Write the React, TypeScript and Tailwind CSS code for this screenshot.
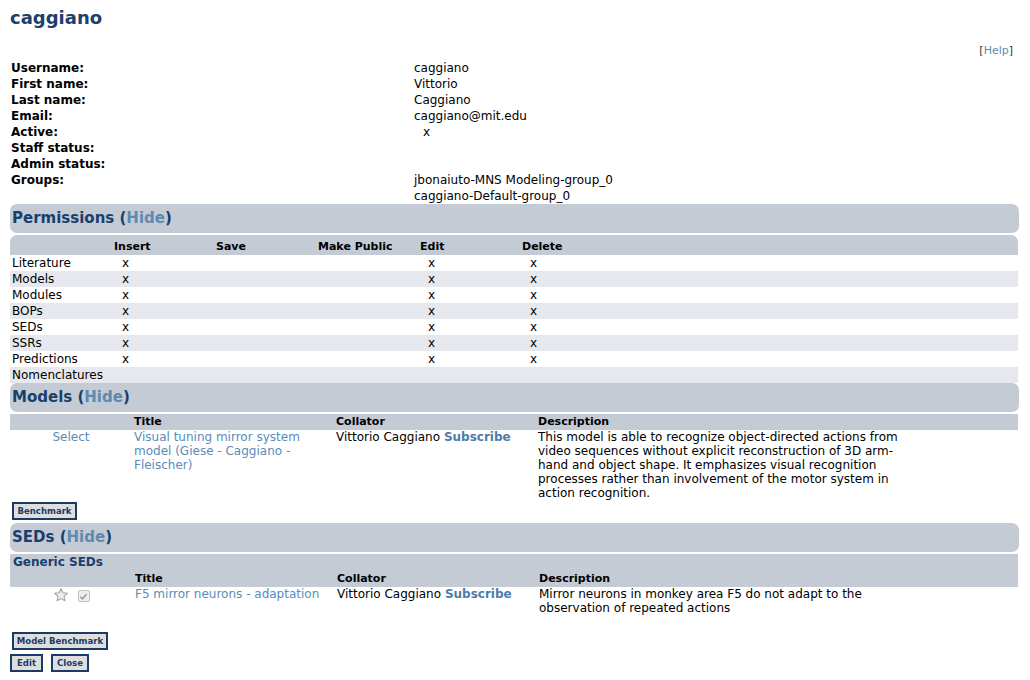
import React from 'react';

const perms = [
  { name: 'Literature', insert: true, edit: true, del: true },
  { name: 'Models', insert: true, edit: true, del: true },
  { name: 'Modules', insert: true, edit: true, del: true },
  { name: 'BOPs', insert: true, edit: true, del: true },
  { name: 'SEDs', insert: true, edit: true, del: true },
  { name: 'SSRs', insert: true, edit: true, del: true },
  { name: 'Predictions', insert: true, edit: true, del: true },
  { name: 'Nomenclatures', insert: false, edit: false, del: false },
];

const info: [string, string][] = [
  ['Username:', 'caggiano'],
  ['First name:', 'Vittorio'],
  ['Last name:', 'Caggiano'],
  ['Email:', 'caggiano@mit.edu'],
  ['Active:', 'x'],
  ['Staff status:', ''],
  ['Admin status:', ''],
  ['Groups:', 'jbonaiuto-MNS Modeling-group_0'],
  ['', 'caggiano-Default-group_0'],
];

function SectionBar({ title }: { title: string }) {
  return (
    <div className="flex h-[29px] items-center rounded-[7px] bg-[#c5cbd5] pl-[2px] text-[15px] font-bold text-[#17406d]">
      {title}&nbsp;(<a className="text-[#5f8ab0]">Hide</a>)
    </div>
  );
}

function Btn({ label, w }: { label: string; w: string }) {
  return (
    <button
      className={`flex h-[18px] items-center justify-center border-2 border-[#1b3a66] bg-[#dedede] font-['DejaVu_Sans_Condensed','Liberation_Sans',sans-serif] text-[9.5px] font-bold text-[#1b3a66] ${w}`}
    >
      {label}
    </button>
  );
}

function Star() {
  return (
    <svg width="16" height="16" viewBox="0 0 24 24">
      <path
        d="M12 2.5l2.9 6.2 6.6.8-4.9 4.6 1.3 6.6L12 17.4l-5.9 3.3 1.3-6.6-4.9-4.6 6.6-.8z"
        fill="#ececec"
        stroke="#a4a4a4"
        strokeWidth="1.6"
        strokeLinejoin="round"
      />
    </svg>
  );
}

function CheckedBox() {
  return (
    <span className="flex h-[12px] w-[12px] items-center justify-center rounded-[2px] border border-[#c3c3c3] bg-[#eeeeee]">
      <svg width="9" height="9" viewBox="0 0 10 10">
        <path d="M1.5 5.2l2.4 2.4 4.6-5.4" fill="none" stroke="#9a9a9a" strokeWidth="1.6" />
      </svg>
    </span>
  );
}

export default function App() {
  return (
    <div className="min-h-screen bg-white font-['DejaVu_Sans',sans-serif] text-[12px] text-black">
      <div className="pl-[10px] pr-[11px]">
        <h1 className="pt-[7px] text-[18px] leading-[21px] font-bold text-[#1b406e]">caggiano</h1>

        <div className="mt-[15px] flex justify-end pr-[6px] text-[11px] leading-[16px] text-[#333]">
          [<a className="text-[#5f8ab0]">Help</a>]
        </div>

        {/* user info */}
        <div className="mt-px grid grid-cols-[404px_1fr] leading-[16px]">
          {info.map(([label, value], i) => (
            <React.Fragment key={i}>
              <div className="pl-px font-bold">{label}</div>
              <div className={label === 'Active:' ? 'pl-[9px]' : ''}>{value || '\u00a0'}</div>
            </React.Fragment>
          ))}
        </div>

        {/* permissions */}
        <SectionBar title="Permissions" />
        <div className="mt-[2px] mr-px">
          <div className="grid h-[20px] grid-cols-[102px_102px_102px_102px_102px_102px_1fr] items-end rounded-t-[7px] bg-[#c5cbd5] pb-[1px] text-[11px] font-bold leading-[14px]">
            <div />
            <div className="pl-[2px]">Insert</div>
            <div className="pl-[2px]">Save</div>
            <div className="pl-[2px]">Make Public</div>
            <div className="pl-[2px]">Edit</div>
            <div className="pl-[2px]">Delete</div>
            <div />
          </div>
          {perms.map((p, i) => (
            <div
              key={p.name}
              className={`grid h-[16px] grid-cols-[102px_102px_102px_102px_102px_102px_1fr] leading-[16px] ${
                i % 2 === 1 ? 'bg-[#e6e8ed]' : 'bg-white'
              }`}
            >
              <div className="pl-[2px]">{p.name}</div>
              <div className="pl-[10px]">{p.insert ? 'x' : ''}</div>
              <div />
              <div />
              <div className="pl-[10px]">{p.edit ? 'x' : ''}</div>
              <div className="pl-[10px]">{p.del ? 'x' : ''}</div>
              <div />
            </div>
          ))}
        </div>

        {/* models */}
        <SectionBar title="Models" />
        <div className="mt-[2px] mr-px">
          <div className="grid h-[16px] grid-cols-[122px_202px_202px_364px_1fr] bg-[#c5cbd5] text-[11px] font-bold leading-[16px]">
            <div />
            <div className="pl-[2px]">Title</div>
            <div className="pl-[2px]">Collator</div>
            <div className="pl-[2px]">Description</div>
            <div />
          </div>
          <div className="grid grid-cols-[122px_202px_202px_364px_1fr] leading-[14px]">
            <div className="text-center text-[#5b8bb8]">Select</div>
            <div className="pl-[2px] text-[#5b8bb8]">
              Visual tuning mirror system model (Giese - Caggiano - Fleischer)
            </div>
            <div className="pl-[2px]">
              Vittorio Caggiano <a className="font-bold text-[#4d7ca8]">Subscribe</a>
            </div>
            <div className="pl-[2px]">
              This model is able to recognize object-directed actions from video sequences without explicit
              reconstruction of 3D arm-hand and object shape. It emphasizes visual recognition processes rather than
              involvement of the motor system in action recognition.
            </div>
            <div />
          </div>
        </div>
        <div className="mt-[2px] ml-[2px]">
          <Btn label="Benchmark" w="w-[65px]" />
        </div>

        {/* SEDs */}
        <div className="mt-[3px]">
          <SectionBar title="SEDs" />
        </div>
        <div className="mt-[2px] mr-px">
          <div className="h-[17px] bg-[#c5cbd5] pl-[3px] font-bold leading-[17px] text-[#17406d]">Generic SEDs</div>
          <div className="grid h-[16px] grid-cols-[122px_202px_202px_364px_1fr] bg-[#c5cbd5] text-[11px] font-bold leading-[16px]">
            <div />
            <div className="pl-[3px]">Title</div>
            <div className="pl-[3px]">Collator</div>
            <div className="pl-[3px]">Description</div>
            <div />
          </div>
          <div className="grid grid-cols-[122px_202px_202px_364px_1fr] leading-[14px]">
            <div className="flex items-start justify-center gap-[9px]">
              <Star />
              <span className="pt-[3px]">
                <CheckedBox />
              </span>
            </div>
            <div className="pl-[3px] text-[#5b8bb8]">F5 mirror neurons - adaptation</div>
            <div className="pl-[3px]">
              Vittorio Caggiano <a className="font-bold text-[#4d7ca8]">Subscribe</a>
            </div>
            <div className="pl-[3px]">
              Mirror neurons in monkey area F5 do not adapt to the observation of repeated actions
            </div>
            <div />
          </div>
        </div>

        <div className="mt-[17px] ml-[2px]">
          <Btn label="Model Benchmark" w="w-[96px]" />
        </div>
        <div className="mt-[4px] flex gap-[8px]">
          <Btn label="Edit" w="w-[33px]" />
          <Btn label="Close" w="w-[38px]" />
        </div>
      </div>
    </div>
  );
}
